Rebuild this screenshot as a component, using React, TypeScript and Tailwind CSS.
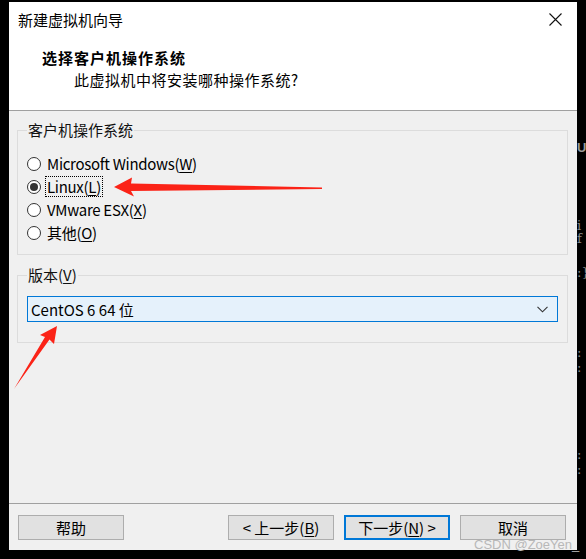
import React from 'react';

const FONT = "font-['Noto_Sans_CJK_SC','Noto_Sans',sans-serif]";

function Radio({ checked, children, focused }: { checked?: boolean; children: React.ReactNode; focused?: boolean }) {
  return (
    <div className="flex items-center h-[23px]">
      <span className="w-[14px] h-[14px] rounded-full border border-[#333] bg-white flex items-center justify-center shrink-0">
        {checked && <span className="w-[8px] h-[8px] rounded-full bg-[#333]" />}
      </span>
      <span
        className={
          'ml-[5px] leading-[19px] px-[1px] tracking-[-0.3px] ' +
          (focused ? 'outline outline-1 outline-dotted outline-black' : '')
        }
      >
        {children}
      </span>
    </div>
  );
}

function Btn({ children, primary }: { children: React.ReactNode; primary?: boolean }) {
  return (
    <button
      className={
        'w-[106px] h-[25px] bg-[#e1e1e1] flex items-center justify-center text-[15px] leading-none text-black ' +
        (primary ? 'border-2 border-[#0078d7]' : 'border border-[#adadad]')
      }
    >
      {children}
    </button>
  );
}

export default function App() {
  return (
    <div className={`relative w-[586px] h-[559px] bg-black pt-[2px] pl-[9px] pr-[9px] pb-[9px] text-black text-[15px] ${FONT}`}>
      {/* dialog */}
      <div className="w-[568px] h-[548px] bg-[#f0f0f0] flex flex-col">
        {/* title + header */}
        <div className="bg-white border-b border-[#a0a0a0] h-[109px] flex flex-col">
          <div className="h-[34px] flex items-center justify-between pl-[9px]">
            <span className="leading-none">新建虚拟机向导</span>
            <span className="w-[44px] h-[34px] flex items-center justify-center">
              <svg width="13" height="13" viewBox="0 0 13 13">
                <path d="M0.5 0.5 L12.5 12.5 M12.5 0.5 L0.5 12.5" stroke="#111" strokeWidth="1.1" fill="none" />
              </svg>
            </span>
          </div>
          <div className="pl-[33px] mt-[12px] font-bold leading-[20px] tracking-[1px]">选择客户机操作系统</div>
          <div className="pl-[65px] mt-[2px] leading-[20px] tracking-[0.5px]">此虚拟机中将安装哪种操作系统?</div>
        </div>

        {/* body */}
        <div className="flex-1 flex flex-col px-[8px]">
          <fieldset className="mt-[9px] border border-[#dcdcdc] px-[9px] pb-[10px] mr-[1px]">
            <legend className="px-[1px] leading-[20px] text-[#111]">客户机操作系统</legend>
            <div className="pt-[12px]">
              <Radio>
                Microsoft Windows(<span className="underline underline-offset-2">W</span>)
              </Radio>
              <Radio checked focused>
                Linux(<span className="underline underline-offset-2">L</span>)
              </Radio>
              <Radio>
                VMware ESX(<span className="underline underline-offset-2">X</span>)
              </Radio>
              <Radio>
                其他(<span className="underline underline-offset-2">O</span>)
              </Radio>
            </div>
          </fieldset>

          <fieldset className="mt-[10px] border border-[#dcdcdc] px-[9px] pb-[20px] mr-[1px]">
            <legend className="px-[1px] leading-[20px] text-[#111]">
              版本(<span className="underline underline-offset-2">V</span>)
            </legend>
            <div className="pt-[11px]">
              <div className="h-[26px] border border-[#0078d7] bg-[#e5f1fb] flex items-center justify-between pl-[3px] pr-[9px]">
                <span className="leading-none whitespace-pre">CentOS 6 64 位</span>
                <svg width="11" height="7" viewBox="0 0 11 7">
                  <polyline points="0.5,0.8 5.5,5.8 10.5,0.8" stroke="#333" strokeWidth="1.1" fill="none" />
                </svg>
              </div>
            </div>
          </fieldset>
        </div>

        {/* footer */}
        <div className="border-t border-[#a0a0a0] pt-[11px] pb-[10px] pl-[9px] pr-[11px] flex items-center">
          <Btn>帮助</Btn>
          <div className="flex-1" />
          <div className="flex gap-[10px]">
            <Btn>
              &lt; 上一步(<span className="underline underline-offset-2">B</span>)
            </Btn>
            <Btn primary>
              下一步(<span className="underline underline-offset-2">N</span>) &gt;
            </Btn>
            <Btn>取消</Btn>
          </div>
        </div>
      </div>

      {/* red annotation arrows */}
      <svg className="absolute left-0 top-0 pointer-events-none" width="586" height="559">
        <polygon points="114,187 132,177.5 131,183.5 322,187.5 322,189 131,191 134,196.5" fill="#fb2317" />
        <polygon points="57,326 54,344 49.5,339.5 14,389 45,337 40,335" fill="#fb2317" />
      </svg>

      {/* background bleed on the right edge */}
      <div className="absolute left-[577px] top-0 w-[9px] h-[559px] overflow-hidden text-[#8a8a8a] text-[13px] font-['DejaVu_Serif',serif] leading-none">
        <span className="absolute left-0 top-[141px] font-['Liberation_Sans',sans-serif] font-bold text-[#9a9a9a]">UN</span>
        <span className="absolute left-0 top-[219px]">i f</span>
        <span className="absolute left-0 top-[266px]">{':}'}</span>
        <span className="absolute left-0 top-[346px]">:</span>
        <span className="absolute left-0 top-[361px]">:</span>
        <span className="absolute left-0 top-[448px]">:</span>
        <span className="absolute left-0 top-[463px]">:</span>
      </div>

      {/* watermark */}
      <span className="absolute left-[474px] top-[538px] text-[13px] leading-none text-[#b8b8b8] font-['Liberation_Sans',sans-serif]">
        CSDN @ZoeYen_
      </span>
    </div>
  );
}
